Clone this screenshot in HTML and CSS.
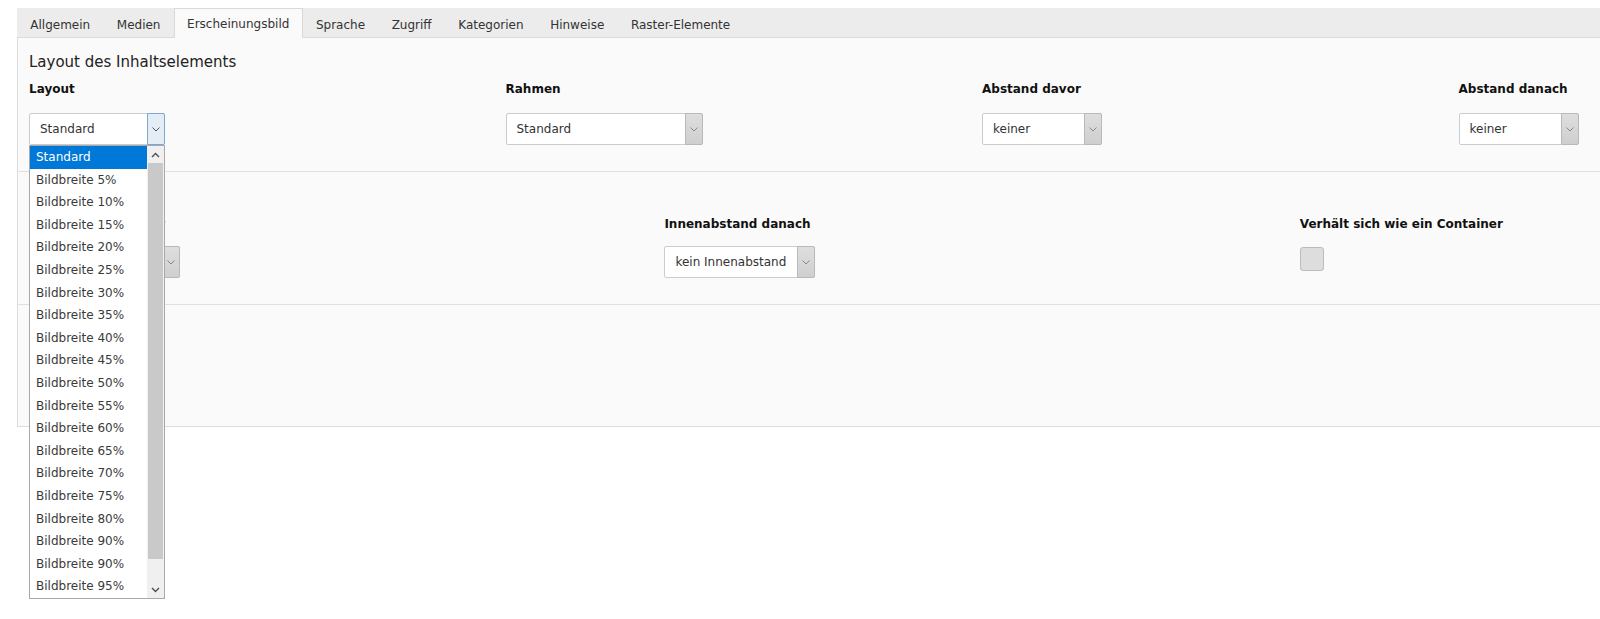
FILE: index.html
```html
<!DOCTYPE html>
<html lang="de">
<head>
<meta charset="utf-8">
<title>Erscheinungsbild</title>
<link rel="stylesheet" href="styles.css">
</head>
<body>
<div class="page">
  <ul class="tabs">
    <li class="tab">Allgemein</li>
    <li class="tab">Medien</li>
    <li class="tab active">Erscheinungsbild</li>
    <li class="tab">Sprache</li>
    <li class="tab">Zugriff</li>
    <li class="tab">Kategorien</li>
    <li class="tab">Hinweise</li>
    <li class="tab">Raster-Elemente</li>
  </ul>
  <div class="panel">
    <section class="sec sec-first">
      <h3 class="sec-title">Layout des Inhaltselements</h3>
      <div class="row row-4">
        <div class="field">
          <div class="label">Layout</div>
          <div class="select w-layout focused">
            <span class="val">Standard</span>
            <span class="btn"><svg width="8" height="5" viewBox="0 0 8 5"><path d="M0.5 0.5 L4 4 L7.5 0.5" fill="none" stroke="#555" stroke-width="1"/></svg></span>
            <div class="dropdown">
              <ul class="options">
                <li class="opt selected">Standard</li>
                <li class="opt">Bildbreite 5%</li>
                <li class="opt">Bildbreite 10%</li>
                <li class="opt">Bildbreite 15%</li>
                <li class="opt">Bildbreite 20%</li>
                <li class="opt">Bildbreite 25%</li>
                <li class="opt">Bildbreite 30%</li>
                <li class="opt">Bildbreite 35%</li>
                <li class="opt">Bildbreite 40%</li>
                <li class="opt">Bildbreite 45%</li>
                <li class="opt">Bildbreite 50%</li>
                <li class="opt">Bildbreite 55%</li>
                <li class="opt">Bildbreite 60%</li>
                <li class="opt">Bildbreite 65%</li>
                <li class="opt">Bildbreite 70%</li>
                <li class="opt">Bildbreite 75%</li>
                <li class="opt">Bildbreite 80%</li>
                <li class="opt">Bildbreite 90%</li>
                <li class="opt">Bildbreite 90%</li>
                <li class="opt">Bildbreite 95%</li>
              </ul>
              <div class="scrollbar">
                <div class="sb-arrow"><svg width="9" height="6" viewBox="0 0 9 6"><path d="M1 5 L4.5 1.5 L8 5" fill="none" stroke="#505050" stroke-width="1.4"/></svg></div>
                <div class="sb-thumb"></div>
                <div class="sb-track"></div>
                <div class="sb-arrow"><svg width="9" height="6" viewBox="0 0 9 6"><path d="M1 1 L4.5 4.5 L8 1" fill="none" stroke="#505050" stroke-width="1.4"/></svg></div>
              </div>
            </div>
          </div>
        </div>
        <div class="field">
          <div class="label">Rahmen</div>
          <div class="select w-rahmen">
            <span class="val">Standard</span>
            <span class="btn"><svg width="8" height="5" viewBox="0 0 8 5"><path d="M0.5 0.5 L4 4 L7.5 0.5" fill="none" stroke="#888" stroke-width="1"/></svg></span>
          </div>
        </div>
        <div class="field">
          <div class="label">Abstand davor</div>
          <div class="select w-abstand">
            <span class="val">keiner</span>
            <span class="btn"><svg width="8" height="5" viewBox="0 0 8 5"><path d="M0.5 0.5 L4 4 L7.5 0.5" fill="none" stroke="#888" stroke-width="1"/></svg></span>
          </div>
        </div>
        <div class="field">
          <div class="label">Abstand danach</div>
          <div class="select w-abstand">
            <span class="val">keiner</span>
            <span class="btn"><svg width="8" height="5" viewBox="0 0 8 5"><path d="M0.5 0.5 L4 4 L7.5 0.5" fill="none" stroke="#888" stroke-width="1"/></svg></span>
          </div>
        </div>
      </div>
    </section>
    <section class="sec sec-second">
      <div class="row row-3">
        <div class="field">
          <div class="label">Innenabstand davor</div>
          <div class="select w-innen">
            <span class="val">kein Innenabstand</span>
            <span class="btn"><svg width="8" height="5" viewBox="0 0 8 5"><path d="M0.5 0.5 L4 4 L7.5 0.5" fill="none" stroke="#888" stroke-width="1"/></svg></span>
          </div>
        </div>
        <div class="field">
          <div class="label">Innenabstand danach</div>
          <div class="select w-innen">
            <span class="val">kein Innenabstand</span>
            <span class="btn"><svg width="8" height="5" viewBox="0 0 8 5"><path d="M0.5 0.5 L4 4 L7.5 0.5" fill="none" stroke="#888" stroke-width="1"/></svg></span>
          </div>
        </div>
        <div class="field">
          <div class="label">Verhält sich wie ein Container</div>
          <div class="checkbox"></div>
        </div>
      </div>
    </section>
    <section class="sec sec-empty"></section>
  </div>
</div>
</body>
</html>
```
FILE: styles.css
```css
html {
  overflow: hidden;
}
html, body {
  margin: 0;
  padding: 0;
  background: #ffffff;
}
body {
  font-family: "DejaVu Sans", Verdana, sans-serif;
  font-size: 12px;
  color: #333333;
  min-height: 619px;
}
.page {
  padding: 8px 0 0 17px;
  width: 1940px;
}
.tabs {
  list-style: none;
  margin: 0;
  padding: 0;
  display: flex;
  height: 30px;
  background: #ececec;
  border-bottom: 1px solid #dcdcdc;
  box-sizing: border-box;
}
.tab {
  padding: 3px 12.3px 0;
  line-height: 27px;
  height: 30px;
  box-sizing: border-box;
  color: #333333;
  border: 1px solid transparent;
  border-bottom: none;
  white-space: nowrap;
}
.tab.active {
  background: #fafafa;
  border-color: #d9d9d9;
  padding-top: 2px;
}
.panel {
  background: #fafafa;
  border: 1px solid #dcdcdc;
  border-top: none;
}
.sec {
  padding: 0 11px;
  border-bottom: 1px solid #e0e0e0;
}
.sec:last-child {
  border-bottom: none;
}
.sec-first {
  padding-top: 14px;
  padding-bottom: 26px;
}
.sec-title {
  margin: 0 0 9px 0;
  font-weight: normal;
  font-size: 15px;
  line-height: 20px;
  color: #222222;
}
.sec-second {
  padding-top: 44px;
  padding-bottom: 26px;
}
.sec-empty {
  height: 121px;
  padding: 0;
}
.row {
  display: grid;
}
.row-4 {
  grid-template-columns: repeat(4, 476.5px);
}
.row-3 {
  grid-template-columns: repeat(3, 635.4px);
}
.field {
  display: flex;
  flex-direction: column;
  align-items: flex-start;
}
.label {
  font-weight: bold;
  font-size: 12px;
  line-height: 16px;
  color: #111111;
  margin-bottom: 16px;
  white-space: nowrap;
}
.sec-second .label {
  margin-bottom: 14px;
}
.select {
  position: relative;
  display: flex;
  height: 32px;
  box-sizing: border-box;
  background: #ffffff;
  border: 1px solid #cccccc;
  border-radius: 2px;
}
.select .val {
  flex: 1;
  padding-left: 10px;
  line-height: 30px;
  color: #333333;
  white-space: nowrap;
  overflow: hidden;
}
.select .btn {
  width: 16px;
  margin: -1px -1px -1px 0;
  display: flex;
  align-items: center;
  justify-content: center;
  background: linear-gradient(#dedede, #cfcfcf);
  border: 1px solid #b9b9b9;
  border-radius: 0 2px 2px 0;
}
.select.focused .btn {
  background: #e4edf6;
  border-color: #7fa6d2;
}
.w-layout { width: 136px; }
.w-rahmen { width: 197px; }
.w-abstand { width: 120px; }
.w-innen { width: 151px; }
.dropdown {
  position: absolute;
  top: 31px;
  left: -1px;
  width: 136px;
  height: 454px;
  box-sizing: border-box;
  border: 1px solid #a9a9a9;
  background: #ffffff;
  display: flex;
  z-index: 10;
}
.options {
  list-style: none;
  margin: 0;
  padding: 0;
  flex: 1;
  overflow: hidden;
}
.opt {
  height: 22.6px;
  line-height: 22.6px;
  padding-left: 6px;
  color: #3a3a3a;
  white-space: nowrap;
}
.opt.selected {
  background: #0078d7;
  color: #ffffff;
}
.scrollbar {
  width: 17px;
  display: flex;
  flex-direction: column;
  background: #f0f0f0;
}
.sb-arrow {
  height: 17px;
  display: flex;
  align-items: center;
  justify-content: center;
  background: #f0f0f0;
}
.sb-thumb {
  height: 396px;
  margin: 0 1px;
  background: #c9c9c9;
}
.sb-track {
  flex: 1;
}
.checkbox {
  width: 24px;
  height: 24px;
  box-sizing: border-box;
  background: #dddddd;
  border: 1px solid #bbbbbb;
  border-radius: 3px;
  margin-top: 1px;
}
```
